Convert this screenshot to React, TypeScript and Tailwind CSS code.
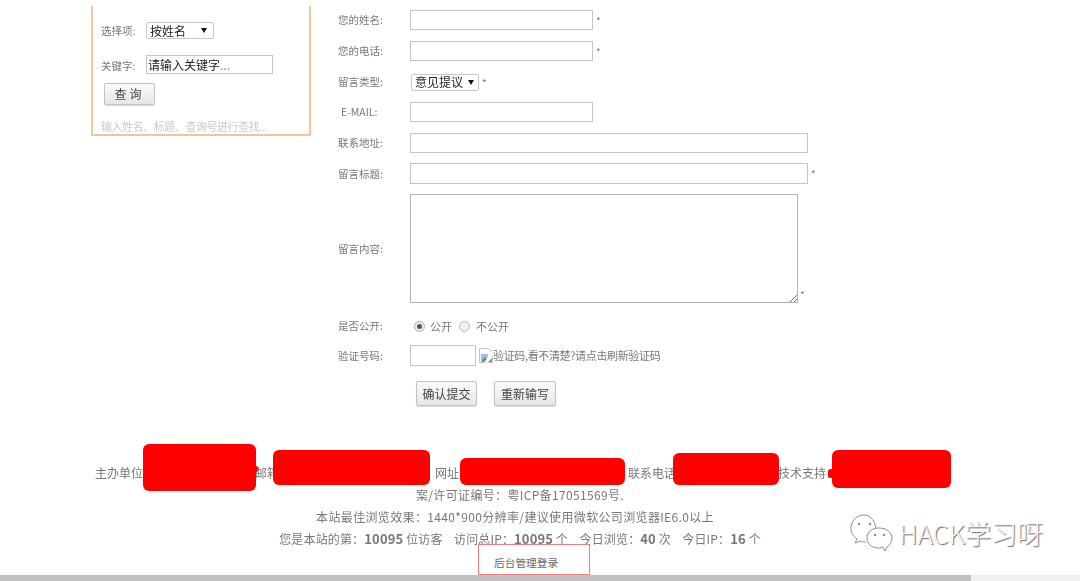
import React from "react";

const font = { fontFamily: '"Noto Sans CJK SC", "Liberation Sans", sans-serif' };
const C = "\uFF1A";

function Row({ label, h, mt, indent, children }: { label: string; h: string; mt: string; indent?: boolean; children: React.ReactNode }) {
  return (
    <div className={`flex items-center ${h} ${mt}`}>
      <div className={`w-[72px] shrink-0 text-[10.5px] text-[#777] ${indent ? "pl-[3px]" : ""}`}>{label}</div>
      {children}
    </div>
  );
}

function Star() {
  return <span className="ml-[3px] text-[10px] text-[#777]">*</span>;
}

function Arrow() {
  return (
    <svg width="6" height="5" viewBox="0 0 6 5" className="shrink-0">
      <path d="M0 0H6L3 5Z" fill="#111" />
    </svg>
  );
}

function BrokenImage() {
  return (
    <svg width="14" height="15" viewBox="0 0 14 15" className="shrink-0">
      <path d="M0.5 0.5H9.5L13.5 4.5V14.5H0.5Z" fill="#fff" stroke="#c4c4c4" />
      <path d="M2 6H9V9L2 13Z" fill="#9dbdf0" />
      <path d="M2 13.5L6 9L8 11L5 14Z" fill="#4f9d4f" />
      <path d="M9 14L13 10V14Z" fill="#6db36d" />
      <path d="M7 15L14 5" stroke="#fff" strokeWidth="2" />
    </svg>
  );
}

function Wechat() {
  return (
    <svg width="44" height="38" viewBox="0 0 44 38" fill="none" stroke="#8d8d8d" strokeWidth="1">
      <path d="M26 17C26 8 21 1 14 1C7 1 1 7 1 14C1 19 3 22 7 25L5 29L11 27C13 28 14 28 16 28" fill="#fff" />
      <path d="M35 37L33 33C31 34 30 34 28 34C21 34 17 29 17 24C17 18 22 14 29 14C36 14 42 18 42 24C42 28 40 31 37 33Z" fill="#fff" />
      <circle cx="9" cy="10" r="1.2" fill="#8d8d8d" stroke="none" />
      <circle cx="20" cy="10" r="1.2" fill="#8d8d8d" stroke="none" />
      <circle cx="25" cy="21" r="1.2" fill="#8d8d8d" stroke="none" />
      <circle cx="34" cy="21" r="1.2" fill="#8d8d8d" stroke="none" />
    </svg>
  );
}

const inputCls = "h-[20px] border border-[#c4c4c4] bg-white";
const btnCls = "flex items-center justify-center rounded-[2px] border border-[#c2c2c2] bg-gradient-to-b from-[#fbfbfb] to-[#e6e6e6] text-[#444] shadow-[0_1px_1px_rgba(0,0,0,0.15)]";
const redactions = [
  "left-[143px] top-[444px] w-[113px] h-[47px] rounded-[6px]",
  "left-[254px] top-[466px] w-[4px] h-[6px] rounded-[2px]",
  "left-[273px] top-[450px] w-[157px] h-[35px] rounded-[6px]",
  "left-[460px] top-[458px] w-[165px] h-[27px] rounded-[6px]",
  "left-[673px] top-[453px] w-[106px] h-[32px] rounded-[6px]",
  "left-[832px] top-[450px] w-[119px] h-[38px] rounded-[6px]",
  "left-[828px] top-[469px] w-[6px] h-[9px] rounded-[3px]",
];

export default function App() {
  return (
    <div className="relative flex h-[581px] w-[1080px] flex-col overflow-hidden bg-white" style={font}>
      <div className="flex h-[434px] shrink-0 pl-[91px] blur-[0.3px]">
        <aside className="mt-[6px] flex h-[130px] w-[220px] shrink-0 flex-col overflow-hidden border-x-2 border-b-2 border-[#f7c39d] pl-[8px] text-[10.5px] text-[#777]">
          <div className="mt-[16px] flex h-[17px] items-center">
            <span className="w-[45px]">选择项:</span>
            <div className="flex h-[17px] w-[68px] items-center justify-between rounded-[2px] border border-[#c8c8c8] pl-[3px] pr-[6px] text-[12px] text-[#222]">
              按姓名<Arrow />
            </div>
          </div>
          <div className="mt-[16px] flex h-[19px] items-center">
            <span className="mt-[2px] w-[45px]">关键字:</span>
            <div className="flex h-[19px] w-[127px] items-center border border-[#c4c4c4] pl-[1px] text-[12px] text-[#222]">
              请输入关键字<span className="text-[#888]">...</span>
            </div>
          </div>
          <button className={`${btnCls} ml-[3px] mt-[9px] h-[26px] w-[51px] text-[12px] tracking-[3px]`}>查询</button>
          <div className="mt-[13px] text-[11px] tracking-[-0.45px] whitespace-nowrap text-[#c9c9c9]">输入姓名、标题、查询号进行查找...</div>
        </aside>

        <main className="ml-[27px] flex flex-col">
          <Row label="您的姓名:" h="h-[20px]" mt="mt-[10px]">
            <div className={`${inputCls} w-[183px]`} /><Star />
          </Row>
          <Row label="您的电话:" h="h-[20px]" mt="mt-[11px]">
            <div className={`${inputCls} w-[183px]`} /><Star />
          </Row>
          <Row label="留言类型:" h="h-[18px]" mt="mt-[12px]">
            <div className="ml-[1px] flex h-[17px] w-[68px] items-center justify-between rounded-[2px] border border-[#c8c8c8] pl-[3px] pr-[4px] text-[12px] text-[#222]">
              意见提议<Arrow />
            </div>
            <Star />
          </Row>
          <Row label="E-MAIL:" h="h-[20px]" mt="mt-[11px]" indent>
            <div className={`${inputCls} w-[183px]`} />
          </Row>
          <Row label="联系地址:" h="h-[20px]" mt="mt-[11px]">
            <div className={`${inputCls} w-[398px]`} />
          </Row>
          <Row label="留言标题:" h="h-[21px]" mt="mt-[10px]">
            <div className={`${inputCls} h-[21px] w-[398px]`} /><Star />
          </Row>
          <Row label="留言内容:" h="h-[109px]" mt="mt-[10px]">
            <div className="relative h-[109px] w-[388px] border border-[#b5b5b5]">
              <svg width="8" height="8" viewBox="0 0 8 8" className="absolute bottom-0 right-0" stroke="#777">
                <path d="M1 8L8 1M5 8L8 5" />
              </svg>
            </div>
            <span className="ml-[2px] mt-[92px] text-[10px] text-[#777]">*</span>
          </Row>
          <Row label="是否公开:" h="h-[18px]" mt="mt-[14px]">
            <div className="ml-[4px] flex items-center text-[11px] text-[#777]">
              <span className="flex h-[11px] w-[11px] items-center justify-center rounded-full border border-[#aaa] bg-[#eee]">
                <span className="h-[5px] w-[5px] rounded-full bg-[#555]" />
              </span>
              <span className="ml-[5px]">公开</span>
              <span className="ml-[7px] h-[11px] w-[11px] rounded-full border border-[#bbb] bg-[#f1f1f1]" />
              <span className="ml-[6px]">不公开</span>
            </div>
          </Row>
          <Row label="验证号码:" h="h-[21px]" mt="mt-[10px]">
            <div className={`${inputCls} h-[21px] w-[66px]`} />
            <div className="ml-[3px] flex items-center text-[11px] text-[#777]">
              <BrokenImage />
              <span className="tracking-[-0.35px]">验证码,看不清楚?请点击刷新验证码</span>
            </div>
          </Row>
          <div className="ml-[78px] mt-[15px] flex gap-[17px]">
            <button className={`${btnCls} h-[25px] w-[61px] text-[12px]`}>确认提交</button>
            <button className={`${btnCls} h-[25px] w-[62px] text-[12px]`}>重新输写</button>
          </div>
        </main>
      </div>

      <footer className="flex flex-col items-center pr-[40px] text-[12px] text-[#777] blur-[0.3px]">
        <div className="mt-[28px] flex h-[22px] w-full items-center whitespace-nowrap pl-[95px]">
          <span className="w-[160px]">主办单位{C}</span>
          <span className="w-[180px]">邮箱{C}</span>
          <span className="w-[193px]">网址{C}</span>
          <span className="w-[150px]">联系电话{C}</span>
          <span>技术支持{C}</span>
        </div>
        <div className="h-[22px] leading-[22px] tracking-[0.35px]">案/许可证编号{C}粤ICP备17051569号.</div>
        <div className="h-[22px] pr-[10px] leading-[22px] tracking-[0.35px]">本站最佳浏览效果{C}1440*900分辨率/建议使用微软公司浏览器IE6.0以上</div>
        <div className="h-[22px] leading-[22px] tracking-[0.15px] whitespace-pre">
          您是本站的第{C}<b className="text-[13px]">10095</b> 位访客{"    "}访问总IP{C}<b className="text-[13px]">10095</b> 个{"    "}今日浏览{C}<b className="text-[13px]">40</b> 次{"    "}今日IP{C}<b className="text-[13px]">16</b> 个
        </div>
      </footer>

      <div className="absolute left-0 right-0 top-[575px] flex h-[6px]">
        <div className="w-[971px] bg-[#c1c1c1]" />
        <div className="flex-1 bg-[#f1f1f1]" />
      </div>

      <div className="absolute left-[478px] top-[544px] flex h-[31px] w-[112px] items-end border border-[#f07f7f] pb-[3px] pl-[15px] text-[10.7px] text-[#666]">
        后台管理登录
      </div>

      {redactions.map((r) => (
        <div key={r} className={`absolute bg-[#ff0000] ${r}`} />
      ))}

      <div className="absolute left-[850px] top-[513px] flex items-center gap-[5px]">
        <Wechat />
        <span className="text-[26px] font-light text-[#f8f8f8] [text-shadow:1px_1px_1px_#666]">HACK学习呀</span>
      </div>
    </div>
  );
}
